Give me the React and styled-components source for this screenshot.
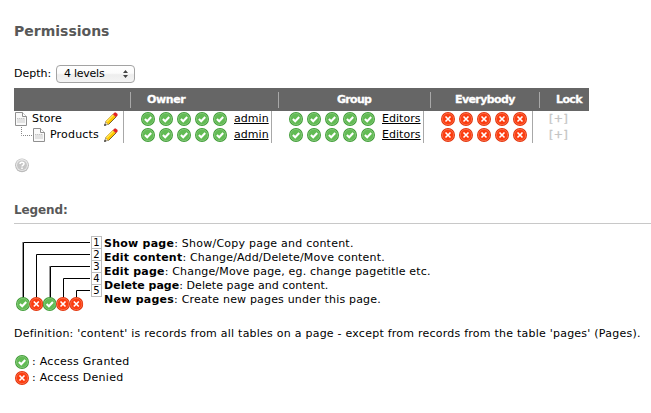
import React from 'react';
import styled, { createGlobalStyle } from 'styled-components';

const GlobalStyle = createGlobalStyle`
  body {
    margin: 0;
    background: #fff;
    color: #000;
    font: 11px/14px Verdana, "DejaVu Sans", sans-serif;
  }
`;

const Page = styled.main`
  box-sizing: border-box;
  width: 651px;
  height: 413px;
  padding: 22px 0 0 14px;
  overflow: hidden;
  white-space: nowrap;
`;

const Title = styled.h2`
  margin: 0;
  height: 43px;
  color: #585858;
  font-size: 14px;
  line-height: 18px;
`;

const DepthBar = styled.div`
  display: flex;
  align-items: center;
  justify-content: space-between;
  width: 121px;
  height: 18px;
  margin-bottom: 5px;
`;

const Select = styled.button`
  display: flex;
  align-items: center;
  justify-content: space-between;
  box-sizing: border-box;
  width: 79px;
  height: 18px;
  padding: 0 6px 0 7px;
  border: 1px solid #a3a3a3;
  border-radius: 4px;
  background: linear-gradient(#fff, #fbfbfb 45%, #ededed 55%, #f4f4f4);
  color: #000;
  font: 11px/14px Verdana, "DejaVu Sans", sans-serif;
  letter-spacing: -0.25px;
`;

const HeadRow = styled.div`
  display: grid;
  grid-template-columns: 117px 148px 152px 109px 49px;
  align-items: center;
  width: 575px;
  height: 23px;
  background: #666;
`;

const HeadCell = styled.div`
  box-sizing: border-box;
  height: 16px;
  padding-left: ${(p) => p.$pad || 0}px;
  border-right: ${(p) => (p.$last ? 0 : 1)}px solid #a8a8a8;
  color: #fff;
  font-weight: bold;
  line-height: 15px;
  letter-spacing: ${(p) => p.$spacing || 0}px;
  -webkit-text-stroke: 0.3px #fff;
`;

const BodyRow = styled.div`
  display: grid;
  grid-template-columns: 110px 148px 152px 109px 56px;
  width: 575px;
  height: 16px;
`;

const BodyCell = styled.div`
  display: flex;
  align-items: center;
  box-sizing: border-box;
  height: 16px;
  padding-left: ${(p) => p.$pad || 0}px;
  border-right: ${(p) => (p.$last ? 0 : 1)}px solid #a8a8a8;
`;

const PageCell = styled(BodyCell)`
  padding-right: 5px;
`;

const PageName = styled.span`
  margin: 0 auto 0 5px;
  letter-spacing: 0.18px;
  line-height: 14px;
`;

const Flags = styled.div`
  display: flex;
  gap: 4px;
  margin-right: 7px;
`;

const Member = styled.a`
  color: #000;
  line-height: 14px;
  letter-spacing: 0.04px;
  text-decoration: underline;
  text-underline-offset: 1px;
`;

const LockMark = styled.span`
  color: #c4c4c4;
  letter-spacing: 0.5px;
  -webkit-text-stroke: 0.3px #c4c4c4;
`;

const HelpSlot = styled.div`
  box-sizing: border-box;
  height: 59px;
  padding-top: 15px;
`;

const SectionTitle = styled.h3`
  box-sizing: border-box;
  width: 637px;
  height: 22px;
  margin: 0 0 12px;
  border-bottom: 1px solid #c8c8c8;
  color: #585858;
  font-size: 12px;
  line-height: 16px;
  letter-spacing: -0.12px;
`;

const Legend = styled.section`
  display: flex;
  height: 76px;
`;

const NumberColumn = styled.div`
  display: flex;
  flex-direction: column;
  box-sizing: border-box;
  width: 11px;
  height: 61px;
  border: 1px solid #bdbdbd;
`;

const NumberBox = styled.span`
  box-sizing: border-box;
  height: 12px;
  border-bottom: 1px solid #bdbdbd;
  font-size: 10px;
  line-height: 12px;
  text-align: center;
  &:last-child {
    border-bottom: 0;
  }
`;

const Terms = styled.div`
  margin: 1px 0 0 2px;
`;

const Term = styled.div`
  height: 14px;
  letter-spacing: ${(p) => p.$spacing}px;
`;

const TermName = styled.b`
  letter-spacing: ${(p) => p.$spacing}px;
`;

const Definition = styled.p`
  height: 14px;
  margin: 15px 0 13px;
  letter-spacing: 0.235px;
`;

const KeyRow = styled.div`
  display: flex;
  align-items: center;
  height: 16px;
  gap: 3px;
  padding-left: 1px;
  letter-spacing: 0.27px;
`;

const Icon = styled.svg`
  display: block;
  flex: none;
`;

function Status({ ok, ...rest }) {
  return (
    <Icon width="14" height="14" viewBox="0 0 14 14" {...rest}>
      <circle cx="7" cy="7" r="7" fill={ok ? '#3f9c36' : '#e2320a'} />
      <circle
        cx="7"
        cy="7"
        r="5.7"
        fill={ok ? '#62bb54' : '#fc3d10'}
        stroke={ok ? '#94d089' : '#ff7f5c'}
        strokeWidth="0.7"
      />
      {ok ? (
        <path d="M3.9 7 6.2 9.2 10.2 5" fill="none" stroke="#fff" strokeWidth="2.1" />
      ) : (
        <path d="M4.5 4.5 9.5 9.5M9.5 4.5 4.5 9.5" fill="none" stroke="#fff" strokeWidth="1.6" />
      )}
    </Icon>
  );
}

function PageIcon() {
  return (
    <Icon width="13" height="14" viewBox="0 0 13 14">
      <path d="M1.5.5H8.5L12.5 4.5V13.5H1.5Z" fill="#fafafa" stroke="#909090" />
      <path d="M8.5.5V4.5H12.5" fill="#fff" stroke="#909090" />
      <path d="M3 6H11V11H3Z" fill="#e2e2e2" />
      <path d="M3 6.5H11" stroke="#c4c4c4" strokeDasharray="1 1" />
    </Icon>
  );
}

function Pencil() {
  return (
    <Icon width="14" height="14" viewBox="0 0 14 14">
      <path d="M.6 13.4 1.8 9.6 4.4 12.2Z" fill="#f7dfae" stroke="#444" strokeWidth=".5" />
      <path d="M1.6 9.6 9 2.2 11.8 5 4.4 12.4Z" fill="#ffc800" />
      <path d="M2.6 9.9 9.4 3.1" stroke="#ffe95c" strokeWidth="1.3" />
      <path d="M1.5 9.5 8.9 2.1" stroke="#b8861c" strokeWidth=".5" />
      <path d="M4.5 12.5 12.4 4.6" stroke="#3a2800" strokeWidth=".7" />
      <path d="M9 2.2 10.5.7H12L13.4 2.1V3.4L11.8 5Z" fill="#e62222" stroke="#b01414" strokeWidth=".3" />
      <path d="M.2 13.8 2.2 13.2 .8 11.8Z" fill="#000" />
    </Icon>
  );
}

function Branch() {
  return (
    <Icon width="18" height="16" viewBox="0 0 18 16">
      <path d="M7.5 0V8.5H18" fill="none" stroke="#858585" strokeDasharray="1 1" />
    </Icon>
  );
}

function Help() {
  return (
    <Icon width="16" height="16" viewBox="0 0 16 16">
      <circle cx="8" cy="7.3" r="6.9" fill="#bcbcbc" />
      <circle cx="8" cy="7.1" r="6" fill="#e9e9e9" />
      <circle cx="8" cy="7.3" r="4.9" fill="#c6c6c6" />
      <path d="M6 5.9C6 3.6 10 3.6 10 5.8 10 7.1 8 7 8 8.6M8 9.6V11" fill="none" stroke="#fff" strokeWidth="1.5" />
    </Icon>
  );
}

function Arrows() {
  return (
    <Icon width="5" height="8" viewBox="0 0 5 8">
      <path d="M0 3 2.5 0 5 3ZM0 5H5L2.5 8Z" fill="#444" />
    </Icon>
  );
}

function Connectors() {
  return (
    <Icon width="77" height="76" viewBox="0 0 77 76">
      <path
        d="M9.5 62V6.5H76M22.5 62V18.5H76M36.5 62V30.5H76M49.5 62V42.5H76M62.5 62V54.5H76"
        fill="none"
        stroke="#000"
      />
      <path d="M8.5 62V6M35.5 62V30" stroke="#999" />
      <Status ok x="2" y="61" />
      <Status x="15.3" y="61" />
      <Status ok x="28.7" y="61" />
      <Status x="42" y="61" />
      <Status x="55.3" y="61" />
    </Icon>
  );
}

const StatusSet = ({ ok }) => (
  <Flags>{[0, 1, 2, 3, 4].map((i) => <Status key={i} ok={ok} />)}</Flags>
);

const rows = [{ name: 'Store' }, { name: 'Products', child: true }];

const terms = [
  { name: 'Show page', text: 'Show/Copy page and content.', bold: 0.25, spacing: 0.23 },
  { name: 'Edit content', text: 'Change/Add/Delete/Move content.', bold: 0.2, spacing: 0.18 },
  { name: 'Edit page', text: 'Change/Move page, eg. change pagetitle etc.', bold: 0.2, spacing: 0.17 },
  { name: 'Delete page', text: 'Delete page and content.', bold: 0.02, spacing: 0.06 },
  { name: 'New pages', text: 'Create new pages under this page.', bold: 0.25, spacing: 0.18 },
];

export default function App() {
  return (
    <Page>
      <GlobalStyle />
      <Title>Permissions</Title>
      <DepthBar>
        <span>Depth:</span>
        <Select>4 levels <Arrows /></Select>
      </DepthBar>
      <HeadRow>
        <HeadCell />
        <HeadCell $pad={16} $spacing={-0.4}>Owner</HeadCell>
        <HeadCell $pad={58} $spacing={-0.7}>Group</HeadCell>
        <HeadCell $pad={24} $spacing={-0.6}>Everybody</HeadCell>
        <HeadCell $pad={16} $spacing={-0.6} $last>Lock</HeadCell>
      </HeadRow>
      {rows.map((row) => (
        <BodyRow key={row.name}>
          <PageCell>
            {row.child && <Branch />}
            <PageIcon />
            <PageName>{row.name}</PageName>
            <Pencil />
          </PageCell>
          <BodyCell $pad={17}><StatusSet ok /><Member>admin</Member></BodyCell>
          <BodyCell $pad={17}><StatusSet ok /><Member>Editors</Member></BodyCell>
          <BodyCell $pad={17}><StatusSet /></BodyCell>
          <BodyCell $pad={16} $last><LockMark>[+]</LockMark></BodyCell>
        </BodyRow>
      ))}
      <HelpSlot><Help /></HelpSlot>
      <SectionTitle>Legend:</SectionTitle>
      <Legend>
        <Connectors />
        <NumberColumn>
          {[1, 2, 3, 4, 5].map((n) => <NumberBox key={n}>{n}</NumberBox>)}
        </NumberColumn>
        <Terms>
          {terms.map(({ name, text, bold, spacing }) => (
            <Term key={name} $spacing={spacing}>
              <TermName $spacing={bold}>{name}</TermName>: {text}
            </Term>
          ))}
        </Terms>
      </Legend>
      <Definition>
        Definition: 'content' is records from all tables on a page - except from records from the table 'pages' (Pages).
      </Definition>
      <KeyRow><Status ok />: Access Granted</KeyRow>
      <KeyRow><Status />: Access Denied</KeyRow>
    </Page>
  );
}
